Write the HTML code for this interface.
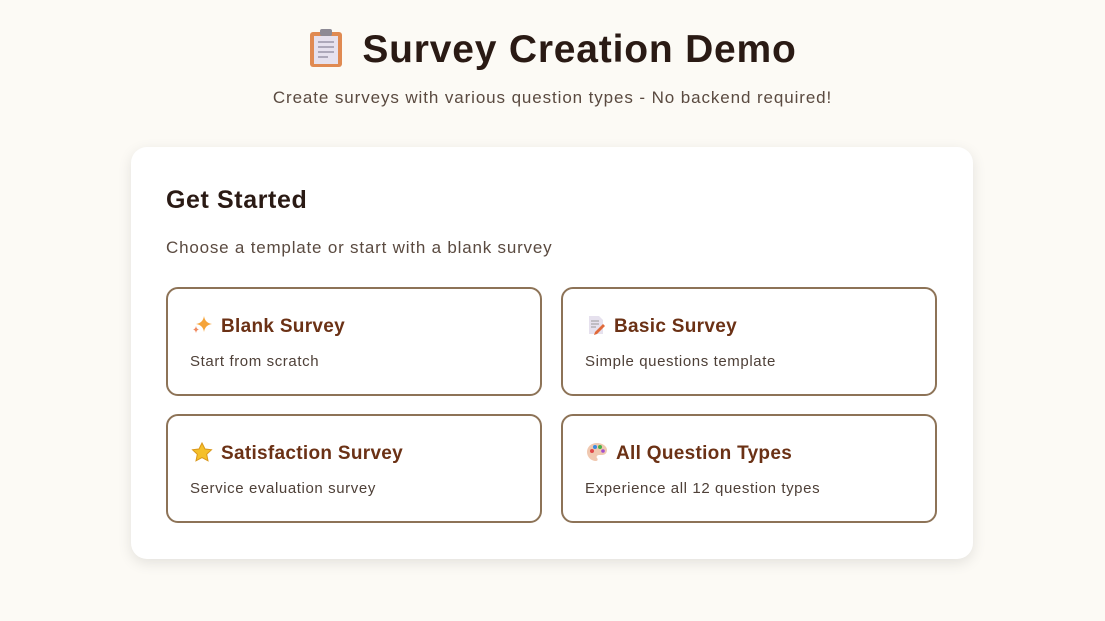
<!DOCTYPE html>
<html><head><meta charset="utf-8"><style>
*{box-sizing:border-box;margin:0;padding:0}
body{width:1105px;height:621px;background:#fcfaf5;font-family:"Liberation Sans",sans-serif;color:#2a1a14;position:relative;overflow:hidden}
h1{position:absolute;top:28px;left:0;width:1105px;text-align:center;font-size:39px;font-weight:700;letter-spacing:0.8px}
h1 svg{vertical-align:-6px;margin-right:18px}
.sub{position:absolute;top:88px;width:1105px;text-align:center;font-size:17px;color:#5a4a40;letter-spacing:0.9px}
.card{position:absolute;left:131px;top:147px;width:842px;height:412px;background:#fff;border-radius:16px;box-shadow:0 4px 14px rgba(0,0,0,.1)}
.card h2{position:absolute;left:35px;top:39px;font-size:25px;font-weight:700;letter-spacing:0.6px}
.card p.c{position:absolute;left:35px;top:91px;font-size:17px;color:#5a4a40;letter-spacing:0.8px}
.t{position:absolute;width:376px;height:109px;border:2px solid #8d7357;border-radius:12px}
.t h3{position:absolute;left:23px;top:26px;font-size:19px;font-weight:700;color:#6b3115;white-space:nowrap;letter-spacing:0.3px}
.t h3 svg{vertical-align:-3px;margin-right:8px}
.t p{position:absolute;left:22px;top:64px;font-size:15px;color:#4e4038;letter-spacing:0.6px}
</style></head><body>
<h1><svg width="36" height="40" viewBox="0 0 36 40"><rect x="2" y="4" width="32" height="35" rx="3" fill="#e08a52"/><rect x="6" y="8" width="24" height="28" fill="#e6e1ee"/><rect x="12" y="1" width="12" height="7" rx="2" fill="#8d8a95"/><g stroke="#9a95a8" stroke-width="1.5"><line x1="10" y1="14" x2="26" y2="14"/><line x1="10" y1="19" x2="26" y2="19"/><line x1="10" y1="24" x2="26" y2="24"/><line x1="10" y1="29" x2="20" y2="29"/></g></svg>Survey Creation Demo</h1>
<div class="sub">Create surveys with various question types - No backend required!</div>
<div class="card">
<h2>Get Started</h2>
<p class="c">Choose a template or start with a blank survey</p>
<div class="t" style="left:35px;top:140px"><h3><svg width="22" height="20" viewBox="0 0 22 20"><path d="M13 1Q14 8 21 9Q14 10 13 17Q12 10 5 9Q12 8 13 1Z" fill="#f5a43a"/><path d="M5 11Q5.5 14 8 14.5Q5.5 15 5 18Q4.5 15 2 14.5Q4.5 14 5 11Z" fill="#f08a60"/></svg>Blank Survey</h3><p>Start from scratch</p></div>
<div class="t" style="left:430px;top:140px"><h3><svg width="20" height="20" viewBox="0 0 20 20"><path d="M3 1h10l4 4v14H3z" fill="#e6e1ee"/><g stroke="#999" stroke-width="1"><line x1="5" y1="6" x2="13" y2="6"/><line x1="5" y1="9" x2="13" y2="9"/><line x1="5" y1="12" x2="10" y2="12"/></g><path d="M9 17l8-8 2 2-8 8-3 1z" fill="#e06a3a"/></svg>Basic Survey</h3><p>Simple questions template</p></div>
<div class="t" style="left:35px;top:267px"><h3><svg width="22" height="20" viewBox="0 0 22 20"><path d="M11 1l3 6 6.5.8-4.8 4.5 1.3 6.5L11 15.6 5 18.8l1.3-6.5L1.5 7.8 8 7z" fill="#f5c02a" stroke="#d9971a"/></svg>Satisfaction Survey</h3><p>Service evaluation survey</p></div>
<div class="t" style="left:430px;top:267px"><h3><svg width="22" height="20" viewBox="0 0 22 20"><path d="M11 1C5 1 1 5 1 10s4 9 9 9c2 0 2-2 1-3s0-3 2-3h3c3 0 5-2 5-5C21 4 16 1 11 1z" fill="#f0c8b0"/><circle cx="6" cy="9" r="2" fill="#e04a4a"/><circle cx="9" cy="5" r="2" fill="#3a8ae0"/><circle cx="14" cy="5" r="2" fill="#4ab04a"/><circle cx="17" cy="9" r="1.8" fill="#a050d0"/></svg>All Question Types</h3><p>Experience all 12 question types</p></div>
</div>
</body></html>
